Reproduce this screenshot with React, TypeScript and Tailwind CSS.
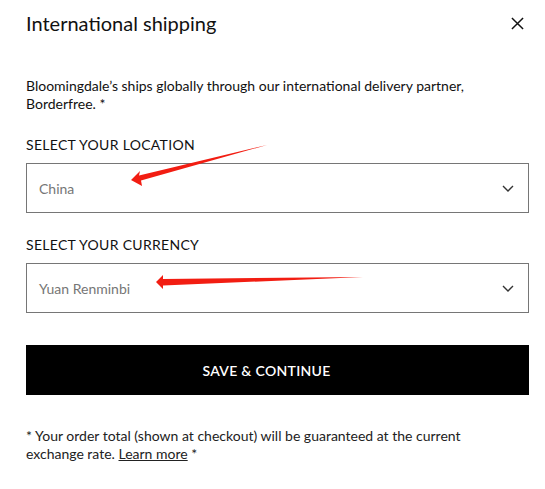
import React from 'react';

function Chevron() {
    return (
        <svg className="w-[12px] h-[7px] text-[#333]" viewBox="0 0 12 7" fill="none" stroke="currentColor" strokeWidth={1.4} aria-hidden="true">
            <path d="M1 1l5 5 5-5" />
        </svg>
    );
}

function SelectBox({ value }: { value: string }) {
    return (
        <div className="h-[50px] border border-[#767676] flex items-center justify-between pl-[12px] pr-[14px]">
            <span className="text-[14px] text-[#767676]">{value}</span>
            <Chevron />
        </div>
    );
}

export default function App() {
    return (
        <main className="relative w-[545px] h-[489px] bg-white text-[#111] font-['Lato',sans-serif] pl-[26px] pr-[16px] pt-[8px]">
            {/* Header */}
            <div className="flex items-center justify-between h-[30px]">
                <h1 className="text-[20px] leading-[30px]">International shipping</h1>
                <button className="mr-[5px] text-[#111]" aria-label="Close">
                    <svg className="w-[13px] h-[13px]" viewBox="0 0 14 14" fill="none" stroke="currentColor" strokeWidth={1.6}>
                        <path d="M1 1l12 12M13 1L1 13" />
                    </svg>
                </button>
            </div>

            <p className="mt-[39px] text-[14px] leading-[18px]">
                Bloomingdale’s ships globally through our international delivery partner, Borderfree. *
            </p>

            <div className="mt-[22px] text-[14px] leading-[20px] tracking-[0.3px]">SELECT YOUR LOCATION</div>
            <div className="mt-[8px]">
                <SelectBox value="China" />
            </div>

            <div className="mt-[22px] text-[14px] leading-[20px] tracking-[0.3px]">SELECT YOUR CURRENCY</div>
            <div className="mt-[8px]">
                <SelectBox value="Yuan Renminbi" />
            </div>

            <button className="mt-[32px] w-full h-[50px] bg-black text-white text-[14px] font-semibold tracking-[0.3px] pr-[22px]">
                SAVE &amp; CONTINUE
            </button>

            <p className="mt-[32px] max-w-[460px] text-[14px] leading-[18px] text-[#222]">
                * Your order total (shown at checkout) will be guaranteed at the current exchange rate.{' '}
                <a href="#" className="underline">Learn more</a> *
            </p>

            {/* Red annotation arrows */}
            <svg className="absolute left-0 top-0 w-[545px] h-[489px] pointer-events-none" viewBox="0 0 545 489" aria-hidden="true">
                <path d="M131 180 L140 171 L139 175.5 L267 145 L141 180.5 L142 186 Z" fill="#f21d12" />
                <path d="M156 282 L163 275 L163 279 L363 277 L163 285.5 L163 289 Z" fill="#f21d12" />
            </svg>
        </main>
    );
}
